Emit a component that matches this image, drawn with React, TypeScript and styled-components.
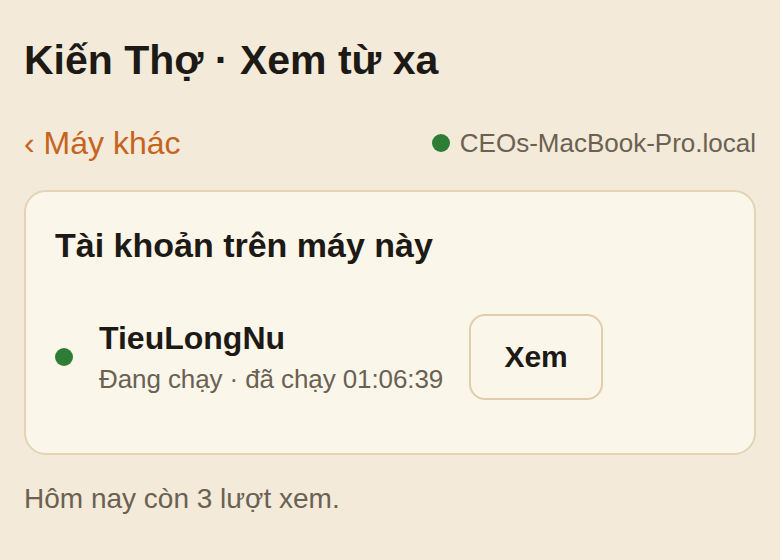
import React from 'react';
import styled, { createGlobalStyle } from 'styled-components';

const GlobalStyle = createGlobalStyle`
  html, body {
    margin: 0;
    padding: 0;
    background: #f3ead9;
  }
  body {
    font-family: 'Liberation Sans', Arial, Helvetica, sans-serif;
    color: #1d1915;
  }
`;

const Page = styled.div`
  padding: 35px 24px 24px 24px;
`;

const Title = styled.h1`
  margin: 0;
  font-size: 41px;
  line-height: 50px;
  font-weight: 700;
  color: #1d1915;
`;

const NavRow = styled.div`
  display: flex;
  align-items: center;
  justify-content: space-between;
  margin-top: 38px;
  height: 40px;
`;

const BackLink = styled.a`
  font-size: 32px;
  line-height: 40px;
  color: #c6641e;
  text-decoration: none;
  cursor: pointer;
`;

const Host = styled.div`
  display: flex;
  align-items: center;
  gap: 10px;
  font-size: 26px;
  color: #6a6152;
`;

const Dot = styled.span<{ $size: number }>`
  display: inline-block;
  width: ${p => p.$size}px;
  height: ${p => p.$size}px;
  border-radius: 50%;
  background: #2e7d35;
  flex-shrink: 0;
`;

const Card = styled.section`
  margin-top: 27px;
  background: #fbf6ea;
  border: 2px solid #e4d3b4;
  border-radius: 22px;
  padding: 32px 29px 53px 29px;
`;

const CardTitle = styled.h2`
  margin: 0;
  font-size: 34px;
  line-height: 42px;
  font-weight: 700;
  color: #1d1915;
`;

const AccountRow = styled.div`
  display: flex;
  align-items: center;
  gap: 26px;
  margin-top: 48px;
`;

const AccountInfo = styled.div`
  display: flex;
  flex-direction: column;
  gap: 6px;
`;

const AccountName = styled.div`
  font-size: 32px;
  line-height: 38px;
  font-weight: 700;
  color: #1d1915;
`;

const AccountMeta = styled.div`
  font-size: 26px;
  line-height: 32px;
  letter-spacing: -0.1px;
  color: #6a6152;
`;

const ViewButton = styled.button`
  width: 134px;
  height: 86px;
  background: #fbf6ea;
  border: 2px solid #e0cda9;
  border-radius: 16px;
  font-family: 'Liberation Sans', Arial, Helvetica, sans-serif;
  font-size: 30px;
  font-weight: 700;
  color: #1d1915;
  cursor: pointer;
`;

const Footer = styled.p`
  margin: 26px 0 0 0;
  font-size: 28px;
  line-height: 36px;
  color: #6a6152;
`;

export default function App() {
  return (
    <>
      <GlobalStyle />
      <Page>
        <Title>Kiến Thợ · Xem từ xa</Title>
        <NavRow>
          <BackLink>‹ Máy khác</BackLink>
          <Host>
            <Dot $size={18} />
            CEOs-MacBook-Pro.local
          </Host>
        </NavRow>
        <Card>
          <CardTitle>Tài khoản trên máy này</CardTitle>
          <AccountRow>
            <Dot $size={18} />
            <AccountInfo>
              <AccountName>TieuLongNu</AccountName>
              <AccountMeta>Đang chạy · đã chạy 01:06:39</AccountMeta>
            </AccountInfo>
            <ViewButton>Xem</ViewButton>
          </AccountRow>
        </Card>
        <Footer>Hôm nay còn 3 lượt xem.</Footer>
      </Page>
    </>
  );
}
